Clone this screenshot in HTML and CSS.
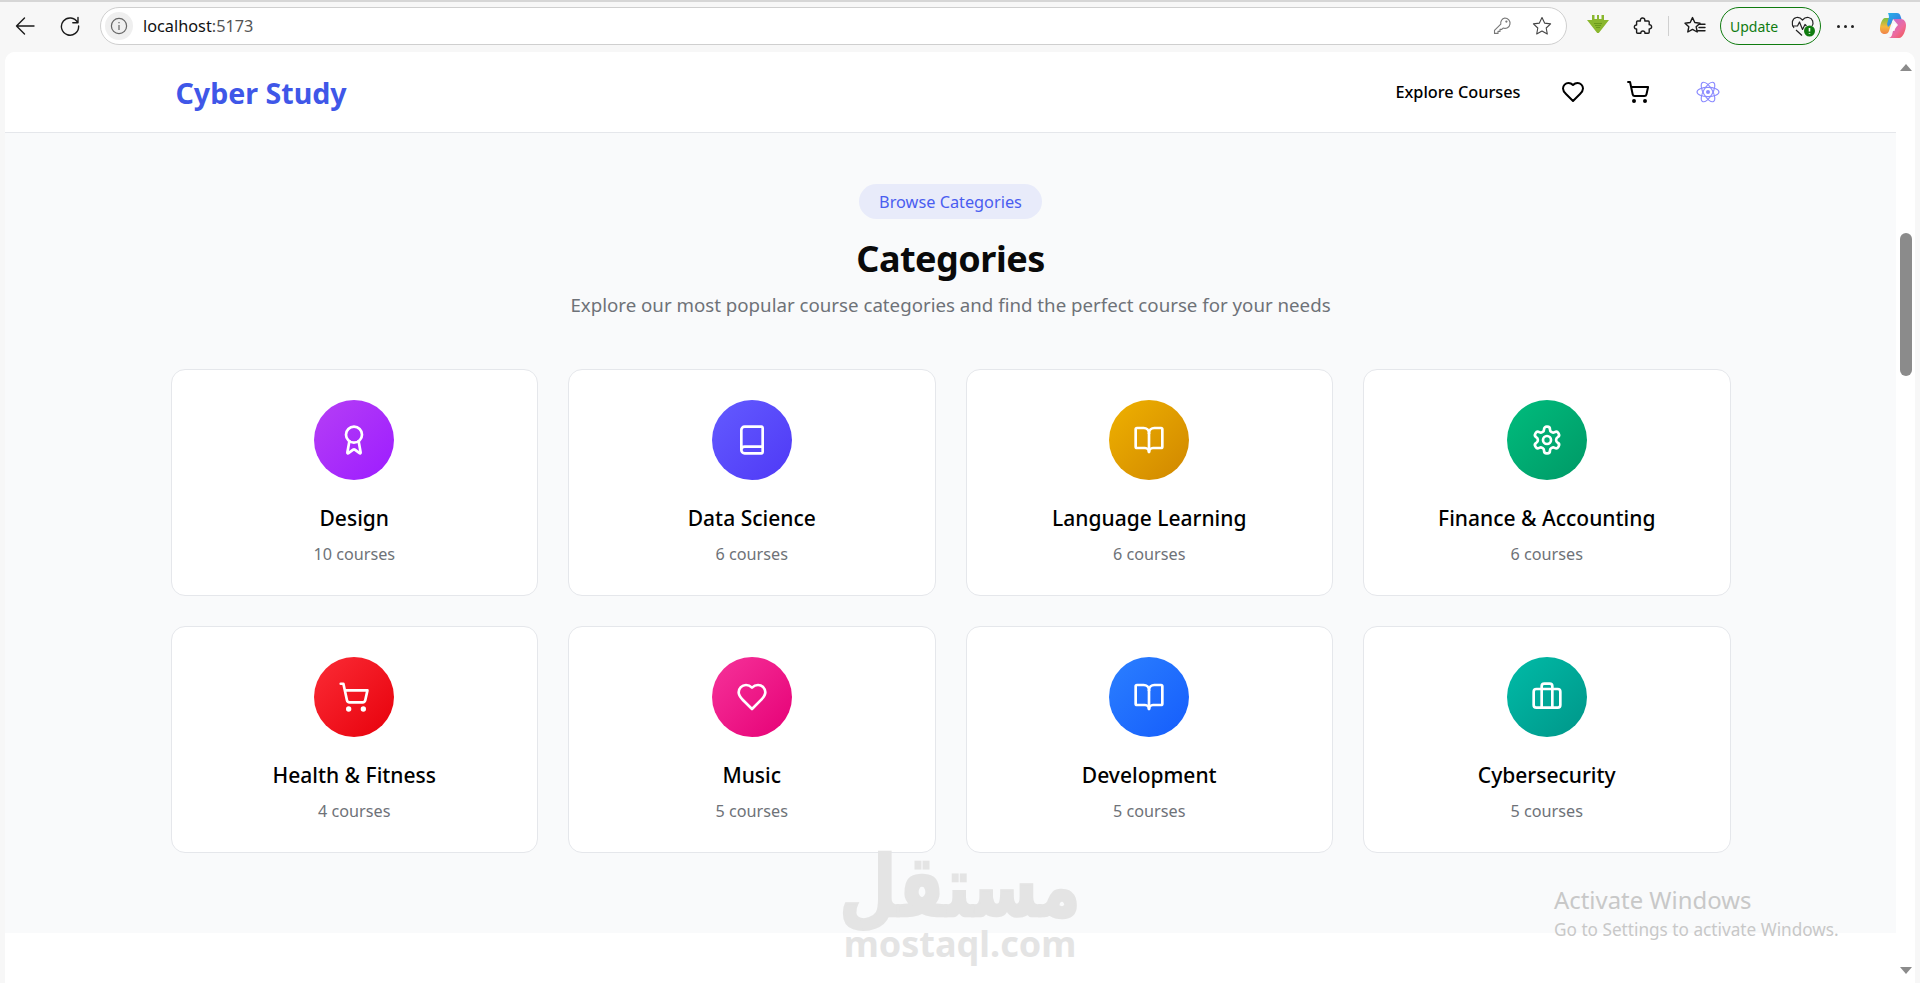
FILE: index.html
```html
<!DOCTYPE html>
<html lang="en">
  <head>
    <meta charset="utf-8" />
    <meta name="viewport" content="width=device-width, initial-scale=1" />
    <title>Cyber Study</title>
    <link rel="stylesheet" href="styles.css">
  </head>
  <body>
    <svg class="sprite" aria-hidden="true">
      <symbol id="i-award" viewBox="0 0 24 24">
        <path d="m15.477 12.89 1.515 8.526a.5.5 0 0 1-.81.47l-3.58-2.687a1 1 0 0 0-1.197 0l-3.586 2.686a.5.5 0 0 1-.81-.469l1.514-8.526" />
        <circle cx="12" cy="8" r="6" />
      </symbol>
      <symbol id="i-book" viewBox="0 0 24 24">
        <path d="M4 19.5v-15A2.5 2.5 0 0 1 6.5 2H19a1 1 0 0 1 1 1v18a1 1 0 0 1-1 1H6.5a1 1 0 0 1 0-5H20" />
      </symbol>
      <symbol id="i-open" viewBox="0 0 24 24">
        <path d="M12 7v14" />
        <path d="M3 18a1 1 0 0 1-1-1V4a1 1 0 0 1 1-1h5a4 4 0 0 1 4 4 4 4 0 0 1 4-4h5a1 1 0 0 1 1 1v13a1 1 0 0 1-1 1h-6a3 3 0 0 0-3 3 3 3 0 0 0-3-3z" />
      </symbol>
      <symbol id="i-gear" viewBox="0 0 24 24">
        <path d="M12.22 2h-.44a2 2 0 0 0-2 2v.18a2 2 0 0 1-1 1.73l-.43.25a2 2 0 0 1-2 0l-.15-.08a2 2 0 0 0-2.73.73l-.22.38a2 2 0 0 0 .73 2.73l.15.1a2 2 0 0 1 1 1.72v.51a2 2 0 0 1-1 1.74l-.15.09a2 2 0 0 0-.73 2.73l.22.38a2 2 0 0 0 2.73.73l.15-.08a2 2 0 0 1 2 0l.43.25a2 2 0 0 1 1 1.73V20a2 2 0 0 0 2 2h.44a2 2 0 0 0 2-2v-.18a2 2 0 0 1 1-1.73l.43-.25a2 2 0 0 1 2 0l.15.08a2 2 0 0 0 2.73-.73l.22-.39a2 2 0 0 0-.73-2.73l-.15-.08a2 2 0 0 1-1-1.74v-.5a2 2 0 0 1 1-1.74l.15-.09a2 2 0 0 0 .73-2.73l-.22-.38a2 2 0 0 0-2.73-.73l-.15.08a2 2 0 0 1-2 0l-.43-.25a2 2 0 0 1-1-1.73V4a2 2 0 0 0-2-2z" />
        <circle cx="12" cy="12" r="3" />
      </symbol>
      <symbol id="i-cart" viewBox="0 0 24 24">
        <circle cx="8" cy="21" r="1" />
        <circle cx="19" cy="21" r="1" />
        <path d="M2.05 2.05h2l2.66 12.42a2 2 0 0 0 2 1.58h9.78a2 2 0 0 0 1.95-1.57l1.65-7.43H5.12" />
      </symbol>
      <symbol id="i-heart" viewBox="0 0 24 24">
        <path d="M19 14c1.49-1.46 3-3.21 3-5.5A5.5 5.5 0 0 0 16.5 3c-1.76 0-3 .5-4.5 2-1.5-1.5-2.74-2-4.5-2A5.5 5.5 0 0 0 2 8.5c0 2.3 1.5 4.05 3 5.5l7 7Z" />
      </symbol>
      <symbol id="i-case" viewBox="0 0 24 24">
        <path d="M16 20V4a2 2 0 0 0-2-2h-4a2 2 0 0 0-2 2v16" />
        <rect width="20" height="14" x="2" y="6" rx="2" />
      </symbol>
    </svg>

    <div class="toolbar">
      <svg class="tool tool-back" viewBox="0 0 20 20">
        <path d="M19 10H1.500M9.500 2 1.500 10l8 8" />
      </svg>
      <svg class="tool tool-reload" viewBox="0 0 20 20">
        <path d="M17.600 6.500A8.600 8.600 0 1 0 18.600 10M18 1.500v5.200h-5.200" />
      </svg>
      <div class="address">
        <span class="site-info">
          <svg viewBox="0 0 18 18">
            <circle cx="9" cy="9" r="7.600" />
            <path d="M9 8v5M9 5v1.200" />
          </svg>
        </span>
        <span class="url">localhost<span class="url-port">:5173</span></span>
        <svg class="addr-icon" viewBox="0 0 20 20">
          <path d="M12.800 2a5.200 5.200 0 1 1-1.700 10.100L9.800 13.400H8v2H6v2H2.500v-3l6.300-6.300A5.200 5.200 0 0 1 12.800 2z" />
          <circle cx="14.400" cy="5.600" r=".6" />
        </svg>
        <svg class="addr-icon addr-star" viewBox="0 0 20 20">
          <path d="m10 1.600 2.600 5.500 6 .8-4.400 4.100 1.100 6L10 15l-5.300 3 1.100-6-4.400-4.100 6-.8z" />
        </svg>
      </div>
      <svg class="ext-download" viewBox="0 0 24 24">
        <path fill="#8ab72e" d="M6 1h2.500v4H11V1h2v4h2.500V1H18v5h5L12.800 19h-1.600L1 6h5z" />
        <path fill="#6b9a1c" d="M8 9h8v1H8zM9 11h6v1H9zM10 13h4v1h-4z" />
      </svg>
      <svg class="tool tool-puzzle" viewBox="0 0 20 20">
        <path d="M7.400 4.200C7 1.600 11.600 1 11.800 3.900c0 .5 0 .8 0 1.100h3.400c.6 0 1 .4 1 1v2.700c3-.6 3.400 4.600 0 4.200v3.300c0 .6-.4 1-1 1h-3.300c.5-2.900-4.500-2.900-4 0H4.600c-.6 0-1-.4-1-1v-3.200c-3 .3-3-4.300 0-4V6c0-.6.4-1 1-1h2.800z" />
      </svg>
      <span class="tool-sep"></span>
      <svg class="tool tool-favs" viewBox="0 0 22 20">
        <path d="m8.500 1.600 2.300 4.900 5.200.7-3.800 3.600 1 5.200-4.700-2.600-4.700 2.600 1-5.200L1 7.200l5.200-.7zM15 8.200h6M15 11.500h6M14 14.800h7" />
      </svg>
      <div class="update">
        <span>Update</span>
        <svg class="update-heart" viewBox="0 0 26 22">
          <path class="update-line" d="M4 13C1 9 1.800 3.500 6.500 2.500c2.500-.5 4.500.8 6 2.500 1.500-1.700 3.500-3 6-2.500C23 3.500 24 8 22 11M2 11h5.500l2-4 3 7.500 2.500-5 1.500 1.500M6 15l6 5.500" />
          <circle class="update-badge" cx="19.500" cy="16" r="5.500" />
          <path class="update-mark" d="M19.500 13v3.400M19.500 18v.8" />
        </svg>
      </div>
      <span class="more"><i></i><i></i><i></i></span>
      <svg class="copilot" viewBox="0 0 28 28">
        <defs>
          <linearGradient id="cop-a" x1="0" y1="0" x2="1" y2="1">
            <stop offset="0" stop-color="#27b4e8" />
            <stop offset="1" stop-color="#3c6ee0" />
          </linearGradient>
          <linearGradient id="cop-b" x1="0" y1="0" x2="0" y2="1">
            <stop offset="0" stop-color="#7ac143" />
            <stop offset=".55" stop-color="#f6b73c" />
            <stop offset="1" stop-color="#f0824a" />
          </linearGradient>
          <linearGradient id="cop-c" x1="0" y1="0" x2="1" y2="1">
            <stop offset="0" stop-color="#b46ee0" />
            <stop offset=".6" stop-color="#ee6b9e" />
            <stop offset="1" stop-color="#f0564e" />
          </linearGradient>
        </defs>
        <path fill="url(#cop-b)" d="M6 6h8l-4 13c-.6 2-2 3-4 3-3 0-5-2-5-5 0-4 2-11 5-11z" />
        <path fill="url(#cop-a)" d="M9 1h9c2 0 3 1 3.500 3l1 3H14l-2 5-3 3-1-3 2-7c-.2-2-.5-3-1-4z" />
        <path fill="url(#cop-c)" d="M14 7h8c3 0 5 3 5 6 0 5-3 13-7 13H9c2 0 3.400-1 4-3l1-4 5-6z" />
        <path fill="#fff" opacity=".85" d="M14.500 12h3l-2 7h-3z" />
      </svg>
    </div>

    <div class="window">
      <div class="page">
        <header class="nav">
          <div class="nav-inner">
            <a class="logo">Cyber Study</a>
            <a class="nav-link">Explore Courses</a>
            <svg class="nav-icon nav-heart"><use href="#i-heart" /></svg>
            <svg class="nav-icon nav-cart"><use href="#i-cart" /></svg>
            <svg class="nav-atom" viewBox="0 0 24 26">
              <ellipse cx="12" cy="13" rx="11" ry="4.600" />
              <ellipse cx="12" cy="13" rx="11" ry="4.600" transform="rotate(60 12 13)" />
              <ellipse cx="12" cy="13" rx="11" ry="4.600" transform="rotate(120 12 13)" />
              <circle class="nav-atom-core" cx="12" cy="13" r="2" />
            </svg>
          </div>
        </header>

        <section class="categories">
          <span class="pill">Browse Categories</span>
          <h2 class="title">Categories</h2>
          <p class="subtitle">Explore our most popular course categories and find the perfect course for your needs</p>

          <div class="grid">
            <a class="card">
              <span class="badge badge-design"><svg class="badge-icon"><use href="#i-award" /></svg></span>
              <h3>Design</h3>
              <p>10 courses</p>
            </a>
            <a class="card">
              <span class="badge badge-data"><svg class="badge-icon"><use href="#i-book" /></svg></span>
              <h3>Data Science</h3>
              <p>6 courses</p>
            </a>
            <a class="card">
              <span class="badge badge-lang"><svg class="badge-icon"><use href="#i-open" /></svg></span>
              <h3>Language Learning</h3>
              <p>6 courses</p>
            </a>
            <a class="card">
              <span class="badge badge-finance"><svg class="badge-icon"><use href="#i-gear" /></svg></span>
              <h3>Finance &amp; Accounting</h3>
              <p>6 courses</p>
            </a>
            <a class="card">
              <span class="badge badge-health"><svg class="badge-icon"><use href="#i-cart" /></svg></span>
              <h3>Health &amp; Fitness</h3>
              <p>4 courses</p>
            </a>
            <a class="card">
              <span class="badge badge-music"><svg class="badge-icon"><use href="#i-heart" /></svg></span>
              <h3>Music</h3>
              <p>5 courses</p>
            </a>
            <a class="card">
              <span class="badge badge-dev"><svg class="badge-icon"><use href="#i-open" /></svg></span>
              <h3>Development</h3>
              <p>5 courses</p>
            </a>
            <a class="card">
              <span class="badge badge-cyber"><svg class="badge-icon"><use href="#i-case" /></svg></span>
              <h3>Cybersecurity</h3>
              <p>5 courses</p>
            </a>
          </div>
        </section>
      </div>

      <div class="scrollbar">
        <span class="arrow-up"></span>
        <span class="thumb"></span>
        <span class="arrow-down"></span>
      </div>
    </div>

    <div class="watermark">
      <span class="watermark-ar" lang="ar" dir="rtl">مستقل</span>
      <span class="watermark-en">mostaql.com</span>
    </div>

    <div class="activate">
      <div class="activate-title">Activate Windows</div>
      <div class="activate-text">Go to Settings to activate Windows.</div>
    </div>
  </body>
</html>
```

FILE: styles.css
```css
html,
body {
  height: 100%;
  margin: 0;
  padding: 0;
}

body {
  position: relative;
  display: flex;
  flex-direction: column;
  background-color: #f7f7f7;
  color: #000;
  font-family: "Noto Sans", "Open Sans", sans-serif;
  overflow: hidden;
}

.sprite {
  display: none;
}

/* browser chrome */

.toolbar {
  display: flex;
  align-items: center;
  flex: none;
  height: 52px;
  border-top: 2px solid #d6d6d6;
  box-sizing: border-box;
  padding: 0 13px 2px 15px;
}

.tool {
  flex: none;
  width: 20px;
  height: 20px;
  fill: none;
  stroke: #1a1a1a;
  stroke-width: 1.4;
  stroke-linecap: round;
  stroke-linejoin: round;
}

.tool-reload {
  margin-left: 25px;
}

.address {
  display: flex;
  align-items: center;
  flex: none;
  width: 1467px;
  height: 38px;
  margin-left: 20px;
  padding: 0 14px 0 4px;
  box-sizing: border-box;
  background-color: #fff;
  border: 1px solid #cfcfcf;
  border-radius: 19px;
}

.site-info {
  display: flex;
  align-items: center;
  justify-content: center;
  width: 28px;
  height: 28px;
  border-radius: 50%;
  background-color: #efefef;
}

.site-info svg {
  width: 18px;
  height: 18px;
  fill: none;
  stroke: #666;
  stroke-width: 1.2;
}

.url {
  flex: 1;
  margin-left: 10px;
  font-size: 16.300px;
  color: #111;
}

.url-port {
  color: #555;
}

.addr-icon {
  width: 20px;
  height: 20px;
  fill: none;
  stroke: #777;
  stroke-width: 1.1;
  stroke-linejoin: round;
}

.addr-star {
  margin-left: 20px;
  stroke: #444;
}

.ext-download {
  flex: none;
  width: 24px;
  height: 24px;
  margin-left: 19px;
}

.tool-puzzle {
  margin-left: 23px;
}

.tool-sep {
  flex: none;
  width: 1px;
  height: 20px;
  margin-left: 15px;
  background-color: #d0d0d0;
}

.tool-favs {
  width: 22px;
  margin-left: 15px;
}

.update {
  display: flex;
  align-items: center;
  flex: none;
  width: 101px;
  height: 38px;
  margin-left: 14px;
  padding-left: 9px;
  box-sizing: border-box;
  border: 1.500px solid #107c10;
  border-radius: 19px;
  color: #107c10;
  font-size: 14px;
}

.update-heart {
  width: 26px;
  height: 22px;
  margin-left: 12px;
}

.update-line {
  fill: none;
  stroke: #222;
  stroke-width: 1.2;
  stroke-linejoin: round;
}

.update-badge {
  fill: #107c10;
}

.update-mark {
  fill: none;
  stroke: #fff;
  stroke-width: 1.6;
}

.more {
  display: flex;
  gap: 4px;
  flex: none;
  margin-left: 16px;
}

.more i {
  width: 3px;
  height: 3px;
  border-radius: 50%;
  background-color: #222;
}

.copilot {
  flex: none;
  width: 28px;
  height: 28px;
  margin-left: 25px;
}

/* page */

.window {
  display: flex;
  flex: 1;
  min-height: 0;
  margin: 0 5px;
  background-color: #fff;
  border-radius: 10px 10px 0 0;
  overflow: hidden;
}

.page {
  flex: 1;
  min-width: 0;
}

.nav {
  height: 81px;
  box-sizing: border-box;
  border-bottom: 1px solid #e5e7eb;
  background-color: #fff;
}

.nav-inner {
  display: flex;
  align-items: center;
  height: 100%;
  max-width: 1550px;
  margin: 0 auto;
  padding-right: 6px;
  box-sizing: border-box;
}

.logo {
  margin-right: auto;
  font-size: 28.600px;
  font-weight: 700;
  color: #3f57e8;
}

.nav-link {
  font-size: 16.300px;
  font-weight: 500;
}

.nav-icon {
  width: 24px;
  height: 24px;
  fill: none;
  stroke: #000;
  stroke-width: 2;
  stroke-linecap: round;
  stroke-linejoin: round;
}

.nav-heart {
  margin-left: 40px;
}

.nav-cart {
  margin-left: 41px;
}

.nav-atom {
  width: 24px;
  height: 26px;
  margin-left: 46px;
  fill: none;
  stroke: #8a8aff;
  stroke-width: 1.1;
}

.nav-atom-core {
  fill: #8a8aff;
  stroke: none;
}

.categories {
  display: flex;
  flex-direction: column;
  align-items: center;
  padding: 51px 0 80px;
  background-color: #f9fafb;
}

.pill {
  display: block;
  width: 183px;
  height: 35px;
  border-radius: 18px;
  background-color: #e8ebfa;
  color: #4a5df0;
  font-size: 16.300px;
  line-height: 37px;
  text-align: center;
}

.title {
  margin: 20px 0 0;
  font-size: 36px;
  font-weight: 700;
  line-height: 40px;
  letter-spacing: -0.5px;
  color: #0a0a0a;
}

.subtitle {
  margin: 12px 0 0;
  font-size: 18.700px;
  line-height: 28px;
  color: #6e7278;
}

.grid {
  display: grid;
  grid-template-columns: repeat(4, 1fr);
  gap: 30px;
  width: 1560px;
  margin-top: 50px;
}

.card {
  display: flex;
  flex-direction: column;
  align-items: center;
  height: 227px;
  padding-top: 30px;
  box-sizing: border-box;
  background-color: #fff;
  border: 1px solid #e5e7eb;
  border-radius: 14px;
}

.card h3 {
  margin: 24px 0 0;
  font-size: 21px;
  font-weight: 500;
  line-height: 28px;
}

.card p {
  margin: 10px 0 0;
  font-size: 16.200px;
  line-height: 24px;
  color: #6e7278;
}

.badge {
  display: flex;
  align-items: center;
  justify-content: center;
  width: 80px;
  height: 80px;
  border-radius: 50%;
}

.badge-icon {
  width: 32px;
  height: 32px;
  fill: none;
  stroke: #fff;
  stroke-width: 2;
  stroke-linecap: round;
  stroke-linejoin: round;
}

.badge-design {
  background: linear-gradient(135deg, #b53ff5, #9d1cff);
}

.badge-data {
  background: linear-gradient(135deg, #635bff, #4f39f6);
}

.badge-lang {
  background: linear-gradient(135deg, #efb100, #d08700);
}

.badge-finance {
  background: linear-gradient(135deg, #00bc7d, #009966);
}

.badge-health {
  background: linear-gradient(135deg, #fb2c36, #e7000b);
}

.badge-music {
  background: linear-gradient(135deg, #f6339a, #e60076);
}

.badge-dev {
  background: linear-gradient(135deg, #2b7fff, #155dfc);
}

.badge-cyber {
  background: linear-gradient(135deg, #00bba7, #009689);
}

/* scrollbar */

.scrollbar {
  display: flex;
  flex-direction: column;
  align-items: center;
  flex: none;
  width: 19px;
  padding: 12px 0 9px;
  box-sizing: border-box;
  background-color: #fff;
}

.arrow-up,
.arrow-down {
  width: 0;
  height: 0;
  border-left: 6px solid transparent;
  border-right: 6px solid transparent;
}

.arrow-up {
  border-bottom: 7px solid #8b8b8b;
}

.arrow-down {
  margin-top: auto;
  border-top: 7px solid #8b8b8b;
}

.thumb {
  width: 12px;
  height: 143px;
  margin-top: 162px;
  border-radius: 6px;
  background-color: #8b8b8b;
}

/* overlays on top of the screenshot */

.watermark {
  position: absolute;
  left: 845px;
  top: 850px;
  width: 230px;
  display: flex;
  flex-direction: column;
  align-items: center;
  color: #e4e4e4;
  pointer-events: none;
}

.watermark-ar {
  font-family: "DejaVu Sans", sans-serif;
  font-size: 66px;
  font-weight: 700;
  line-height: 76px;
  -webkit-text-stroke: 2px #e4e4e4;
  transform: scaleY(1.28);
}

.watermark-en {
  font-family: "Noto Sans", sans-serif;
  font-size: 36px;
  font-weight: 700;
  line-height: 36px;
}

.activate {
  position: absolute;
  left: 1554px;
  top: 884px;
  color: #c8c8c8;
  font-family: "Noto Sans", sans-serif;
}

.activate-title {
  font-size: 23.900px;
  line-height: 31px;
}

.activate-text {
  margin-top: 4px;
  font-size: 17.200px;
  line-height: 21px;
}
```
